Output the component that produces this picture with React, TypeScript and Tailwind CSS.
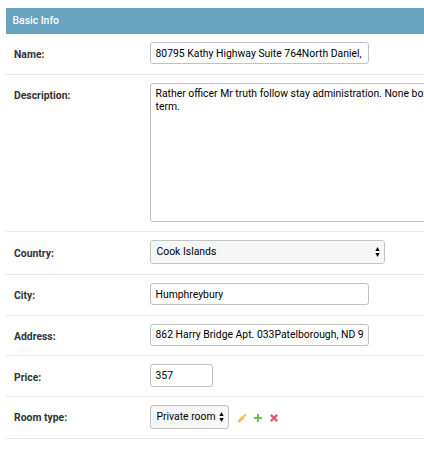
import type { ReactNode } from "react";

function Row({ label, className, labelClass, children }: { label: string; className: string; labelClass: string; children: ReactNode }) {
  return (
    <div className={`flex items-start border-b border-[#e8e8e8] pl-2 pt-2 ${className}`}>
      <div className={`w-[136px] shrink-0 text-[10.4px] font-bold leading-[13px] text-[#333] ${labelClass}`}>{label}</div>
      {children}
    </div>
  );
}

const box = "shrink-0 rounded-[3px] border border-[#c2c2c2] text-black whitespace-nowrap overflow-hidden";

function Field({ value, className }: { value: string; className: string }) {
  return <div className={`${box} bg-white pl-[4.5px] ${className}`}>{value}</div>;
}

function Arrows() {
  return (
    <svg width="5" height="10" viewBox="0 0 5 10" className="-mt-px shrink-0" fill="#000">
      <path d="M2.5 0 4.6 4H.4zM.4 6h4.2L2.5 10z" />
    </svg>
  );
}

function Select({ value, className }: { value: string; className: string }) {
  return (
    <div className={`${box} flex h-6 items-center justify-between bg-[#f6f6f6] pl-[5.5px] pr-1 ${className}`}>
      <span>{value}</span>
      <Arrows />
    </div>
  );
}

export default function App() {
  return (
    <div className="h-[450px] w-full overflow-hidden bg-white pl-1.5 pt-2 font-[Roboto,sans-serif] text-[10.4px]">
      <h2 className="h-[26px] bg-[#68a3c0] pl-[6.5px] text-[10.4px] font-medium leading-[25px] text-white">Basic Info</h2>
      <Row label="Name:" className="h-[41px]" labelClass="pt-[6px]">
        <Field value="80795 Kathy Highway Suite 764North Daniel," className="h-[22px] w-[219px] leading-[21px]" />
      </Row>
      <Row label="Description:" className="h-[157px]" labelClass="pt-[6px]">
        <div className="h-[139px] w-[420px] shrink-0 rounded-[3px] border border-[#c2c2c2] pl-[4.5px] pt-[3px] leading-[13px] text-black">
          Rather officer Mr truth follow stay administration. None box
          <br />
          term.
        </div>
      </Row>
      <Row label="Country:" className="h-[43px]" labelClass="pt-[7px]">
        <Select value="Cook Islands" className="w-[235px]" />
      </Row>
      <Row label="City:" className="h-[41px]" labelClass="pt-[6px]">
        <Field value="Humphreybury" className="h-[22px] w-[219px] leading-[21px]" />
      </Row>
      <Row label="Address:" className="h-10" labelClass="pt-[6px]">
        <Field value="862 Harry Bridge Apt. 033Patelborough, ND 9" className="h-[22px] w-[219px] leading-[19px]" />
      </Row>
      <Row label="Price:" className="h-[41px]" labelClass="pt-[7px]">
        <Field value="357" className="h-[23px] w-[63px] leading-[21px]" />
      </Row>
      <Row label="Room type:" className="h-[42px]" labelClass="pt-[6px]">
        <Select value="Private room" className="w-[79px]" />
        <div className="flex items-center pl-2 pt-2">
          <svg width="10" height="10" viewBox="0 0 10 10" fill="#efbf55">
            <path d="M.7 9.7 1.4 6.9 6 2.3 8 4.3 3.4 8.9zM6.5 1.8 7.3 1Q7.8.6 8.2 1L9.2 2Q9.6 2.5 9.2 2.9L8.5 3.7z" />
          </svg>
          <svg width="8" height="8" viewBox="0 0 8 8" className="ml-[7px]" fill="#70bf56">
            <path d="M3 0h2v3h3v2H5v3H3V5H0V3h3z" />
          </svg>
          <svg width="8" height="8" viewBox="0 0 8 8" className="ml-2" fill="#e25f65">
            <path d="M1.7 0 4 2.2 6.3 0 8 1.7 5.8 4 8 6.3 6.3 8 4 5.8 1.7 8 0 6.3 2.2 4 0 1.7z" />
          </svg>
        </div>
      </Row>
    </div>
  );
}
